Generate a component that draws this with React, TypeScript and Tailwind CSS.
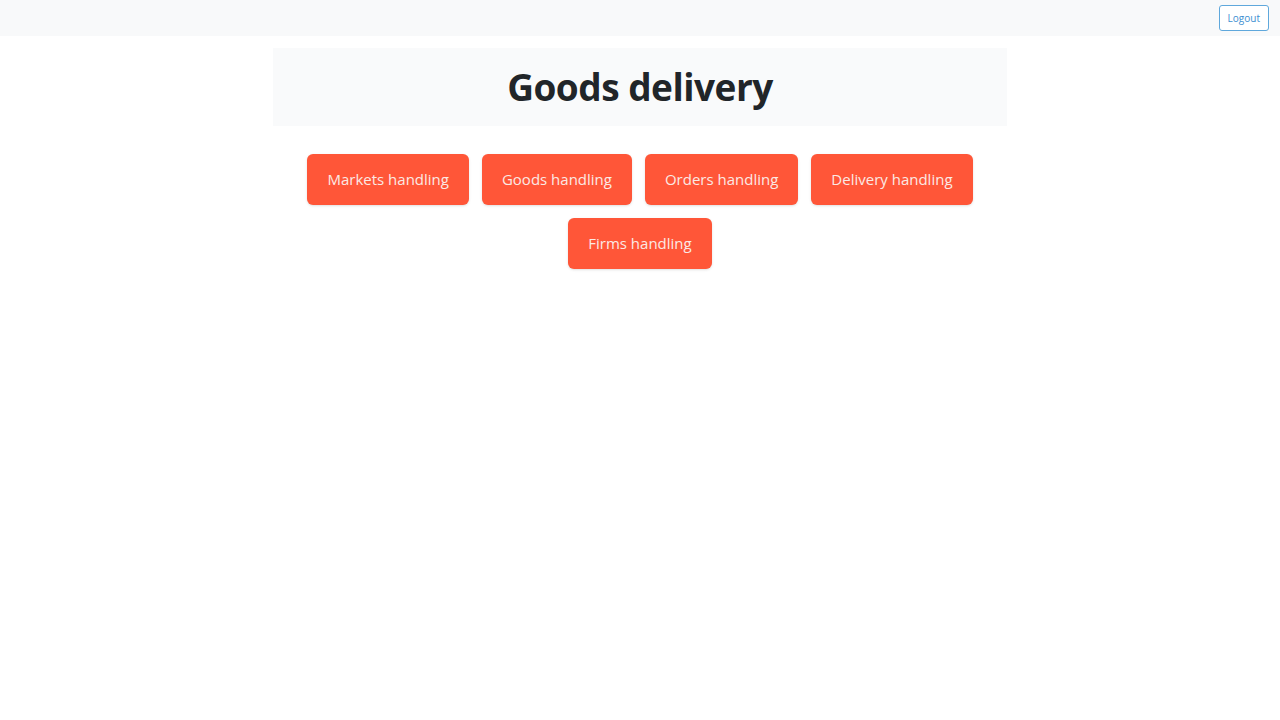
const sections = [
  "Markets handling",
  "Goods handling",
  "Orders handling",
  "Delivery handling",
  "Firms handling",
];

const App = () => {
  return (
    <div className="min-h-screen bg-white font-['Open_Sans',sans-serif] text-[#212529]">
      <nav className="h-9 bg-[#f8f9fa] flex items-center justify-end pr-[11px]">
        <button className="h-[26px] px-[8px] text-[10px] text-[#3d8fd1] border border-[#5fa8dc] rounded-[3px] bg-white leading-none">
          Logout
        </button>
      </nav>
      <div className="w-[734px] mx-auto mt-3">
        <div className="h-[78px] bg-[#f9fafb] flex items-center justify-center">
          <h1 className="text-[37px] font-bold tracking-[-0.5px]">Goods delivery</h1>
        </div>
        <div className="flex flex-wrap justify-center gap-[13px] mt-7">
          {sections.map((s) => (
            <button
              key={s}
              className="h-[51px] px-5 rounded-[6px] bg-[#ff5638] text-[#fbe9e4] text-[15px] shadow-sm"
            >
              {s}
            </button>
          ))}
        </div>
      </div>
    </div>
  );
};

export default App;
